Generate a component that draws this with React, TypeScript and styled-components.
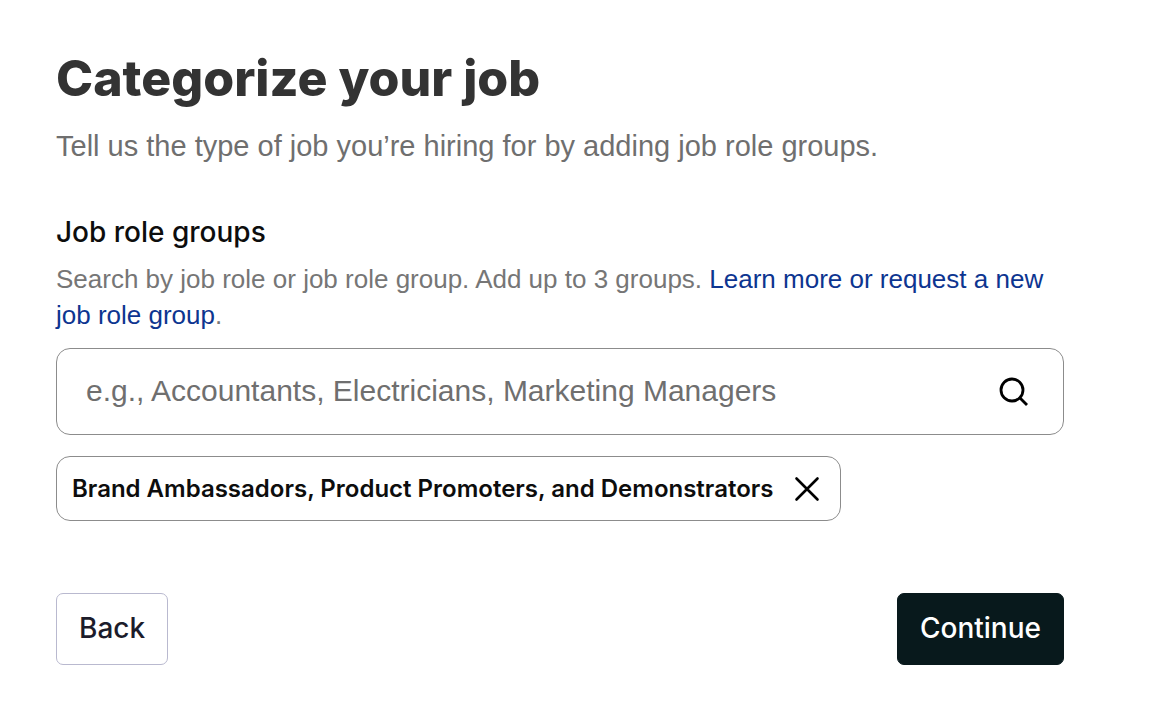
import React, { useState } from "react";
import styled, { createGlobalStyle } from "styled-components";

const body = `"Liberation Sans", Arial, sans-serif`;
const display = `Inter, "Liberation Sans", sans-serif`;

const GlobalStyle = createGlobalStyle`
  * { box-sizing: border-box; }
  body { margin: 0; background: #fff; font-family: ${body}; }
`;

const Page = styled.main`
  padding: 48px 90px 60px 56px;
`;

const Title = styled.h1`
  margin: 0;
  font-family: ${display};
  font-size: 50px;
  line-height: 60px;
  font-weight: 800;
  color: #333;
`;

const Lead = styled.p`
  margin: 18px 0 0;
  font-size: 29px;
  line-height: 40px;
  color: #6f6f6f;
`;

const Field = styled.section`
  margin-top: 48px;
`;

const Label = styled.label`
  display: block;
  font-family: ${display};
  font-size: 28px;
  line-height: 36px;
  font-weight: 500;
  color: #0d0d0d;
`;

const Hint = styled.p`
  margin: 11px 0 0;
  font-size: 26px;
  line-height: 36px;
  color: #767676;
`;

const Link = styled.a`
  color: #0d3590;
  text-decoration: none;
`;

const SearchBox = styled.div`
  display: flex;
  align-items: center;
  margin-top: 15px;
  height: 87px;
  padding: 0 32px 0 29px;
  border: 1px solid #8c8c8c;
  border-radius: 14px;
`;

const SearchInput = styled.input`
  flex: 1;
  min-width: 0;
  padding: 0 0 2px;
  border: 0;
  outline: 0;
  background: transparent;
  font: 400 30px/40px ${body};
  color: #000;
  &::placeholder { color: #6f6f6f; opacity: 1; }
`;

const IconButton = styled.button`
  display: flex;
  padding: 0;
  border: 0;
  background: none;
  color: #000;
  cursor: pointer;
`;

const Tag = styled.div`
  display: inline-flex;
  align-items: center;
  gap: 20px;
  margin-top: 21px;
  height: 65px;
  padding: 0 19px 0 15px;
  border: 1px solid #8c8c8c;
  border-radius: 14px;
  font-family: ${display};
  font-size: 24px;
  line-height: 32px;
  font-weight: 600;
  color: #0d0d0d;
`;

const Actions = styled.footer`
  display: flex;
  justify-content: space-between;
  margin-top: 72px;
`;

const Button = styled.button<{ $primary?: boolean }>`
  height: 72px;
  padding: 0 22px 2px;
  border: 1px solid ${(p) => (p.$primary ? "#08191c" : "#b9b9cf")};
  border-radius: 7px;
  background: ${(p) => (p.$primary ? "#08191c" : "#fff")};
  color: ${(p) => (p.$primary ? "#fff" : "#1c1c2b")};
  font: 500 28px/36px ${display};
  cursor: pointer;
`;

export default function App() {
  const [tags, setTags] = useState(["Brand Ambassadors, Product Promoters, and Demonstrators"]);
  return (
    <Page>
      <GlobalStyle />
      <Title>Categorize your job</Title>
      <Lead>Tell us the type of job you’re hiring for by adding job role groups.</Lead>
      <Field>
        <Label htmlFor="roles">Job role groups</Label>
        <Hint>
          Search by job role or job role group. Add up to 3 groups.{" "}
          <Link href="#request">Learn more or request a new job role group</Link>.
        </Hint>
        <SearchBox>
          <SearchInput id="roles" placeholder="e.g., Accountants, Electricians, Marketing Managers" />
          <IconButton type="button" aria-label="Search">
            <svg width="34" height="34" viewBox="0 0 34 34" fill="none" stroke="currentColor" strokeWidth="2.8">
              <circle cx="15" cy="15" r="11" />
              <path d="M22.5 22.5 30 30" />
            </svg>
          </IconButton>
        </SearchBox>
        {tags.map((tag) => (
          <Tag key={tag}>
            {tag}
            <IconButton type="button" aria-label={`Remove ${tag}`} onClick={() => setTags(tags.filter((t) => t !== tag))}>
              <svg width="28" height="28" viewBox="0 0 28 28" fill="none" stroke="currentColor" strokeWidth="2.6" strokeLinecap="round">
                <path d="M3.5 3.5 24.5 24.5M24.5 3.5 3.5 24.5" />
              </svg>
            </IconButton>
          </Tag>
        ))}
      </Field>
      <Actions>
        <Button type="button">Back</Button>
        <Button type="button" $primary>Continue</Button>
      </Actions>
    </Page>
  );
}
